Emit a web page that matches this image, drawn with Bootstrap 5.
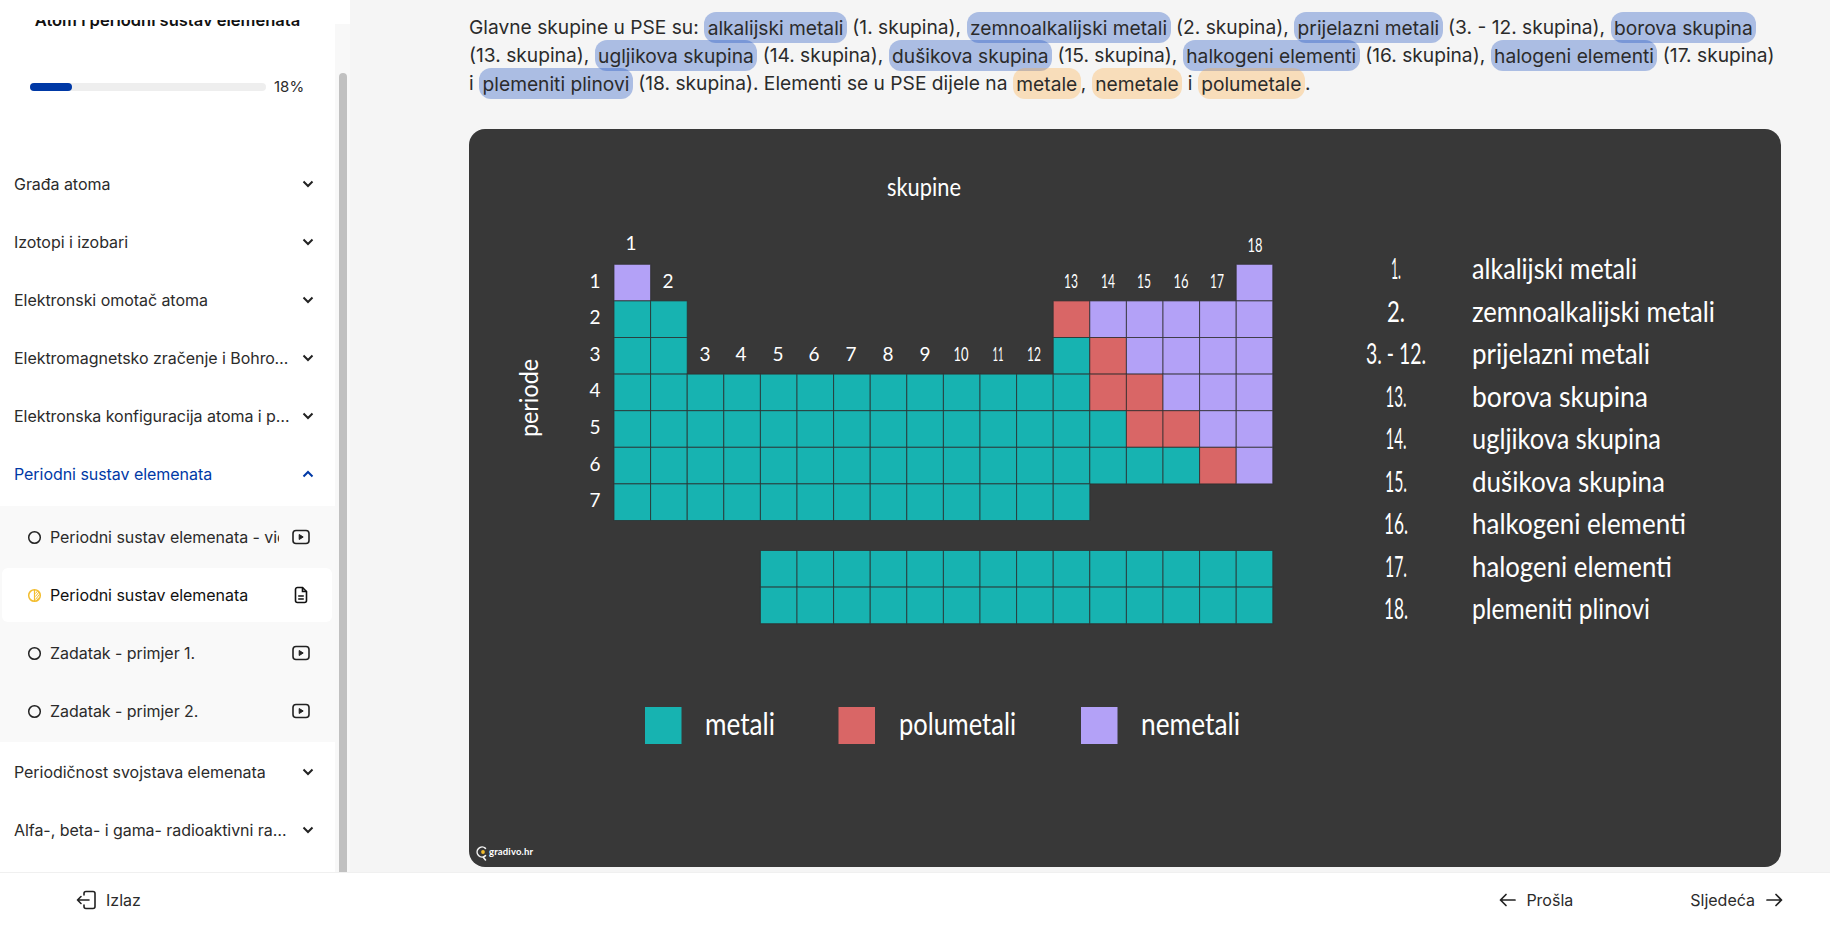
<!DOCTYPE html>
<html lang="hr">
<head>
  <meta charset="UTF-8" />
  <meta name="viewport" content="width=device-width, initial-scale=1.0"/>
  <link href="https://cdn.jsdelivr.net/npm/bootstrap@5.3.3/dist/css/bootstrap.min.css" rel="stylesheet"/>
  <script src="https://cdn.jsdelivr.net/npm/bootstrap@5.3.3/dist/js/bootstrap.bundle.min.js"></script>
  <title>Periodni sustav elemenata</title>
  <style>
    html, body { height: 100%; }
    body {
      font-family: Inter, "Noto Sans", sans-serif;
      color: #2b2b2b;
      background: #f5f5f5;
      overflow: hidden;
    }
    .app-body { height: 872px; }
    .side-panel { width: 350px; background: #fff; }
    .side-scroll { width: 335px; }
    .side-track { width: 15px; margin-top: 24px; background: #f8f8f8; padding-top: 49px; }
    .side-thumb { width: 8px; height: 100%; margin-left: 4px; background: #c1c1c1; border-radius: 4px 4px 0 0; }
    .title-clip { margin-top: 20px; height: 9px; overflow: hidden; text-align: center; }
    .title-text { margin-top: -12px; font-size: 16.5px; line-height: 24px; font-weight: 600; color: #111; }
    .progress-row { margin-top: 46px; height: 24px; padding-left: 30px; }
    .progress-rail { width: 236px; height: 8px; background: #eee; border-radius: 4px; }
    .progress-fill { height: 8px; background: #0039a6; border-radius: 4px; }
    .progress-num { margin-left: 8px; font-size: 15px; }
    .unit-list { margin-top: 56px; }
    .unit-row { height: 58px; padding: 0 21.5px 0 14px; font-size: 16px; letter-spacing: -.05px; }
    .unit-name { width: 277px; }
    .unit-open { color: #0039a6; }
    .sub-panel { display: grid; gap: 4px; background: #f9f9f9; padding: 4px 0; margin: 3px 0 1px; }
    .sub-row { height: 54px; margin: 0 3px 0 2px; padding: 0 22px 0 24.5px; border-radius: 6px; font-size: 16px; letter-spacing: -.05px; }
    .sub-row.sub-active { background: #fff; color: #111; }
    .sub-name { width: 229px; margin-left: 8.5px; white-space: nowrap; overflow: hidden; }
    .sub-ico { width: 18px; }
    .main-col { padding: 13px 49px 0 119px; }
    .lesson-text { font-size: 19.2px; line-height: 28px; margin-bottom: 32px; white-space: nowrap; }
    .hl-blue, .hl-orange { padding: 3.5px 3.5px; border-radius: 12px; }
    .hl-blue { background: rgba(16, 70, 190, .32); }
    .hl-orange { background: rgba(255, 165, 50, .3); }
    .board-img { display: block; width: 1312px; height: 738px; border-radius: 16px; background: #383838; }
    .board-img text { font-family: Lato, sans-serif; font-weight: 400; fill: #fff; }
    .footer-bar { height: 59px; background: #fff; border-top: 1px solid #f0f0f0; font-size: 16px; padding: 0 47px 4px 76px; }
    .footer-gap { margin-left: 9px; }
    .prev-gap { margin-left: 10.500px; }
    .next-gap { margin-left: 11px; }
    .next-link { margin-left: 117px; }
  </style>
</head>
<body>
  <div class="app-body d-flex">
    <aside class="side-panel d-flex flex-shrink-0">
      <div class="side-scroll">
        <div class="title-clip"><div class="title-text">Atom i periodni sustav elemenata</div></div>
        <div class="progress-row d-flex align-items-center">
          <div class="progress-rail"><div class="progress-fill" style="width: 18%"></div></div>
          <span class="progress-num">18%</span>
        </div>
        <div class="unit-list">
          <div class="unit-row d-flex align-items-center justify-content-between">
            <span class="unit-name text-truncate">Građa atoma</span>
            <svg width="12" height="8" viewBox="0 0 12 8" fill="none" stroke="#222" stroke-width="2"><path d="M1.5 1.5 6 6l4.500-4.500"/></svg>
          </div>
          <div class="unit-row d-flex align-items-center justify-content-between">
            <span class="unit-name text-truncate">Izotopi i izobari</span>
            <svg width="12" height="8" viewBox="0 0 12 8" fill="none" stroke="#222" stroke-width="2"><path d="M1.5 1.5 6 6l4.500-4.500"/></svg>
          </div>
          <div class="unit-row d-flex align-items-center justify-content-between">
            <span class="unit-name text-truncate">Elektronski omotač atoma</span>
            <svg width="12" height="8" viewBox="0 0 12 8" fill="none" stroke="#222" stroke-width="2"><path d="M1.5 1.5 6 6l4.500-4.500"/></svg>
          </div>
          <div class="unit-row d-flex align-items-center justify-content-between">
            <span class="unit-name text-truncate">Elektromagnetsko zračenje i Bohrov model atoma</span>
            <svg width="12" height="8" viewBox="0 0 12 8" fill="none" stroke="#222" stroke-width="2"><path d="M1.5 1.5 6 6l4.500-4.500"/></svg>
          </div>
          <div class="unit-row d-flex align-items-center justify-content-between">
            <span class="unit-name text-truncate">Elektronska konfiguracija atoma i periodni sustav</span>
            <svg width="12" height="8" viewBox="0 0 12 8" fill="none" stroke="#222" stroke-width="2"><path d="M1.5 1.5 6 6l4.500-4.500"/></svg>
          </div>
          <div class="unit-row unit-open d-flex align-items-center justify-content-between">
            <span class="unit-name text-truncate">Periodni sustav elemenata</span>
            <svg width="12" height="8" viewBox="0 0 12 8" fill="none" stroke="#0039a6" stroke-width="2"><path d="M1.500 6.500 6 2l4.500 4.500"/></svg>
          </div>
          <div class="sub-panel">
            <div class="sub-row d-flex align-items-center">
              <svg width="15" height="15" viewBox="0 0 15 15" fill="none" stroke="#222" stroke-width="1.500"><circle cx="7.500" cy="7.500" r="5.800"/></svg>
              <span class="sub-name">Periodni sustav elemenata - video</span>
              <svg class="sub-ico ms-auto" width="18" height="16" viewBox="0 0 18 16" fill="none" stroke="#222" stroke-width="1.600"><rect x="1" y="1.500" width="16" height="13" rx="3"/><path d="M7.200 5.500v5l4-2.500z" fill="#222" stroke-width="1"/></svg>
            </div>
            <div class="sub-row sub-active d-flex align-items-center">
              <svg width="15" height="15" viewBox="0 0 15 15" fill="none" stroke="#f3bd2e" stroke-width="1.500"><circle cx="7.500" cy="7.500" r="5.800"/><path d="M7.500 1.700v11.600" stroke-width="1.200"/><path d="M8.500 5.500l2-2.500M8.500 8.500l3.500-4.500M8.500 11.500l4-5.200M10 12l2-2.500" stroke-width="1"/></svg>
              <span class="sub-name">Periodni sustav elemenata</span>
              <svg class="sub-ico ms-auto" width="18" height="18" viewBox="0 0 18 18" fill="none" stroke="#111" stroke-width="1.600"><path d="M3.500 3.500a2 2 0 0 1 2-2h5l4 4v9a2 2 0 0 1-2 2h-7a2 2 0 0 1-2-2z"/><path d="M10.500 1.500v4h4M6.200 10h5.600M6.200 13h5.600"/></svg>
            </div>
            <div class="sub-row d-flex align-items-center">
              <svg width="15" height="15" viewBox="0 0 15 15" fill="none" stroke="#222" stroke-width="1.500"><circle cx="7.500" cy="7.500" r="5.800"/></svg>
              <span class="sub-name">Zadatak - primjer 1.</span>
              <svg class="sub-ico ms-auto" width="18" height="16" viewBox="0 0 18 16" fill="none" stroke="#222" stroke-width="1.600"><rect x="1" y="1.500" width="16" height="13" rx="3"/><path d="M7.200 5.500v5l4-2.500z" fill="#222" stroke-width="1"/></svg>
            </div>
            <div class="sub-row d-flex align-items-center">
              <svg width="15" height="15" viewBox="0 0 15 15" fill="none" stroke="#222" stroke-width="1.500"><circle cx="7.500" cy="7.500" r="5.800"/></svg>
              <span class="sub-name">Zadatak - primjer 2.</span>
              <svg class="sub-ico ms-auto" width="18" height="16" viewBox="0 0 18 16" fill="none" stroke="#222" stroke-width="1.600"><rect x="1" y="1.500" width="16" height="13" rx="3"/><path d="M7.200 5.500v5l4-2.500z" fill="#222" stroke-width="1"/></svg>
            </div>
          </div>
          <div class="unit-row d-flex align-items-center justify-content-between">
            <span class="unit-name text-truncate">Periodičnost svojstava elemenata</span>
            <svg width="12" height="8" viewBox="0 0 12 8" fill="none" stroke="#222" stroke-width="2"><path d="M1.5 1.5 6 6l4.500-4.500"/></svg>
          </div>
          <div class="unit-row d-flex align-items-center justify-content-between">
            <span class="unit-name text-truncate">Alfa-, beta- i gama- radioaktivni raspadi</span>
            <svg width="12" height="8" viewBox="0 0 12 8" fill="none" stroke="#222" stroke-width="2"><path d="M1.5 1.5 6 6l4.500-4.500"/></svg>
          </div>
        </div>
      </div>
      <div class="side-track"><div class="side-thumb"></div></div>
    </aside>
    <main class="main-col flex-grow-1">
      <p class="lesson-text">Glavne skupine u PSE su: <span class="hl-blue">alkalijski metali</span> (1. skupina), <span class="hl-blue">zemnoalkalijski metali</span> (2. skupina), <span class="hl-blue">prijelazni metali</span> (3. - 12. skupina), <span class="hl-blue">borova skupina</span><br>(13. skupina), <span class="hl-blue">ugljikova skupina</span> (14. skupina), <span class="hl-blue">dušikova skupina</span> (15. skupina), <span class="hl-blue">halkogeni elementi</span> (16. skupina), <span class="hl-blue">halogeni elementi</span> (17. skupina)<br>i <span class="hl-blue">plemeniti plinovi</span> (18. skupina). Elementi se u PSE dijele na <span class="hl-orange">metale</span>, <span class="hl-orange">nemetale</span> i <span class="hl-orange">polumetale</span>.</p>
      <svg class="board-img" viewBox="469 129 1312 738" role="img" aria-label="Periodni sustav: skupine, periode, metali, polumetali i nemetali">
        <g id="cells"></g>
        <text x="924" y="196" font-size="25" text-anchor="middle" textLength="74" lengthAdjust="spacingAndGlyphs">skupine</text>
        <text transform="translate(538 398) rotate(-90)" font-size="25" text-anchor="middle" textLength="78" lengthAdjust="spacingAndGlyphs">periode</text>
        <g font-size="19" text-anchor="middle">
          <text x="631" y="250">1</text><text x="668" y="288">2</text>
          <text x="705" y="361">3</text><text x="741" y="361">4</text><text x="778" y="361">5</text><text x="814" y="361">6</text><text x="851" y="361">7</text><text x="888" y="361">8</text><text x="925" y="361">9</text>
          <text x="961" y="361" textLength="15" lengthAdjust="spacingAndGlyphs">10</text><text x="998" y="361" textLength="11" lengthAdjust="spacingAndGlyphs">11</text><text x="1034" y="361" textLength="14" lengthAdjust="spacingAndGlyphs">12</text>
          <text x="1071" y="288" textLength="14" lengthAdjust="spacingAndGlyphs">13</text><text x="1108" y="288" textLength="14" lengthAdjust="spacingAndGlyphs">14</text><text x="1144" y="288" textLength="14" lengthAdjust="spacingAndGlyphs">15</text><text x="1181" y="288" textLength="15" lengthAdjust="spacingAndGlyphs">16</text><text x="1217" y="288" textLength="14" lengthAdjust="spacingAndGlyphs">17</text><text x="1255" y="252" textLength="15" lengthAdjust="spacingAndGlyphs">18</text>
          <text x="595" y="288">1</text><text x="595" y="324">2</text><text x="595" y="361">3</text><text x="595" y="397">4</text><text x="595" y="434">5</text><text x="595" y="471">6</text><text x="595" y="507">7</text>
        </g>
        <g font-size="29" text-anchor="middle">
          <text x="1396" y="279" textLength="10" lengthAdjust="spacingAndGlyphs">1.</text><text x="1396" y="322" textLength="18" lengthAdjust="spacingAndGlyphs">2.</text><text x="1396" y="364" textLength="60" lengthAdjust="spacingAndGlyphs">3. - 12.</text><text x="1396" y="407" textLength="21" lengthAdjust="spacingAndGlyphs">13.</text><text x="1396" y="449" textLength="21" lengthAdjust="spacingAndGlyphs">14.</text><text x="1396" y="492" textLength="22" lengthAdjust="spacingAndGlyphs">15.</text><text x="1396" y="534" textLength="24" lengthAdjust="spacingAndGlyphs">16.</text><text x="1396" y="577" textLength="22" lengthAdjust="spacingAndGlyphs">17.</text><text x="1396" y="619" textLength="24" lengthAdjust="spacingAndGlyphs">18.</text>
        </g>
        <g font-size="29">
          <text x="1472" y="279" textLength="165" lengthAdjust="spacingAndGlyphs">alkalijski metali</text>
          <text x="1472" y="322" textLength="243" lengthAdjust="spacingAndGlyphs">zemnoalkalijski metali</text>
          <text x="1472" y="364" textLength="178" lengthAdjust="spacingAndGlyphs">prijelazni metali</text>
          <text x="1472" y="407" textLength="176" lengthAdjust="spacingAndGlyphs">borova skupina</text>
          <text x="1472" y="449" textLength="189" lengthAdjust="spacingAndGlyphs">ugljikova skupina</text>
          <text x="1472" y="492" textLength="193" lengthAdjust="spacingAndGlyphs">dušikova skupina</text>
          <text x="1472" y="534" textLength="214" lengthAdjust="spacingAndGlyphs">halkogeni elementi</text>
          <text x="1472" y="577" textLength="200" lengthAdjust="spacingAndGlyphs">halogeni elementi</text>
          <text x="1472" y="619" textLength="178" lengthAdjust="spacingAndGlyphs">plemeniti plinovi</text>
        </g>
        <rect x="645" y="707" width="36.500" height="37" fill="#17b3b1"/>
        <rect x="838.500" y="707" width="36.500" height="37" fill="#d96666"/>
        <rect x="1081" y="707" width="36.500" height="37" fill="#b3a1f7"/>
        <g font-size="30">
          <text x="705" y="735" textLength="70" lengthAdjust="spacingAndGlyphs">metali</text>
          <text x="899" y="735" textLength="117" lengthAdjust="spacingAndGlyphs">polumetali</text>
          <text x="1141" y="735" textLength="99" lengthAdjust="spacingAndGlyphs">nemetali</text>
        </g>
        <path d="M485.500 848.300a5 5 0 1 0 0 7.400M483 857l2.500 3" fill="none" stroke="#f2f2f2" stroke-width="1.600" stroke-linecap="round"/>
        <circle cx="483" cy="852" r="1.900" fill="#f3bd2e"/>
        <text x="489" y="855" font-size="9.500" textLength="44" style="font-weight:700">gradivo.hr</text>
      </svg>
    </main>
  </div>
  <footer class="footer-bar d-flex align-items-center">
    <svg width="21" height="20" viewBox="0 0 21 20" fill="none" stroke="#222" stroke-width="1.600" stroke-linecap="round" stroke-linejoin="round"><path d="M8 5V3.500a2 2 0 0 1 2-2h7a2 2 0 0 1 2 2v13a2 2 0 0 1-2 2h-7a2 2 0 0 1-2-2V15M13 10H1.500M5 6.500 1.500 10 5 13.500"/></svg>
    <span class="footer-gap">Izlaz</span>
    <div class="ms-auto d-flex align-items-center">
      <svg width="17" height="14" viewBox="0 0 17 14" fill="none" stroke="#222" stroke-width="1.700" stroke-linecap="round" stroke-linejoin="round"><path d="M16 7H1.500M7 1.500 1.500 7 7 12.500"/></svg>
      <span class="prev-gap">Prošla</span>
      <span class="next-link">Sljedeća</span>
      <svg class="next-gap" width="17" height="14" viewBox="0 0 17 14" fill="none" stroke="#222" stroke-width="1.700" stroke-linecap="round" stroke-linejoin="round"><path d="M1 7h14.500M10 1.500 15.500 7 10 12.500"/></svg>
    </div>
  </footer>
  <script>
    // boje celija po periodama: t metal, r polumetal, p nemetal, . prazno
    const tablica = [
      'p................p',
      'tt..........rppppp',
      'tt..........trpppp',
      'tttttttttttttrrppp',
      'ttttttttttttttrrpp',
      'ttttttttttttttttrp',
      'ttttttttttttt.....'
    ];
    const boje = { t: '#17b3b1', r: '#d96666', p: '#b3a1f7' };
    const korak = 36.6;
    let html = '';
    const celija = (x, y, c) => {
      html += `<rect x="${x.toFixed(1)}" y="${y.toFixed(1)}" width="${korak}" height="${korak}" fill="${boje[c]}" stroke="rgba(45,45,45,.75)" stroke-width="1"/>`;
    };
    tablica.forEach((red, r) => {
      [...red].forEach((c, k) => {
        if (c !== '.') celija(614 + k * korak, 264.3 + r * korak, c);
      });
    });
    for (let r = 0; r < 2; r++) {
      for (let k = 0; k < 14; k++) celija(760.4 + k * korak, 550.5 + r * korak, 't');
    }
    document.getElementById('cells').innerHTML = html;
  </script>
</body>
</html>
